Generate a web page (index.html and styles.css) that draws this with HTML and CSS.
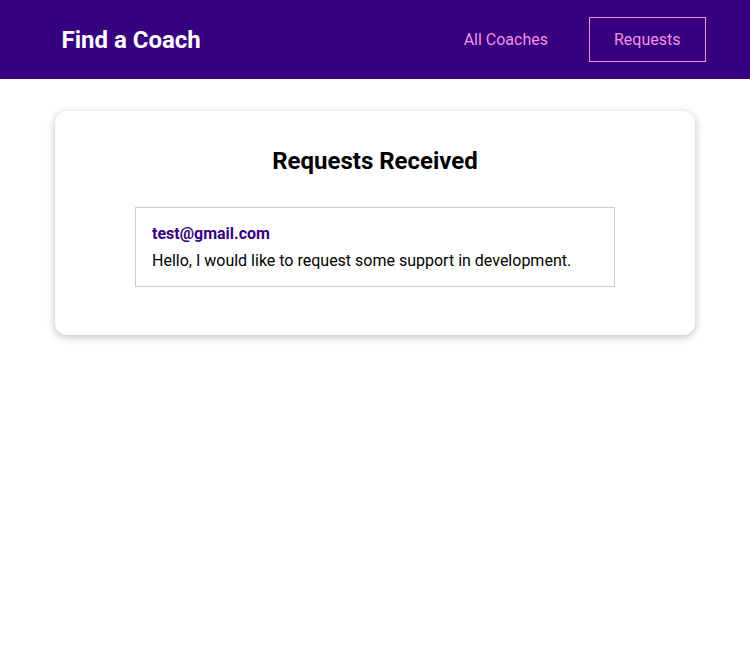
FILE: index.html
```html
<!DOCTYPE html>
<html lang="en">
<head>
<meta charset="utf-8">
<title>Find a Coach</title>
<link rel="stylesheet" href="styles.css">
</head>
<body>
<header class="site-header">
  <nav class="nav">
    <h1 class="brand"><a href="#" class="brand-link">Find a Coach</a></h1>
    <ul class="nav-list">
      <li class="nav-item"><a href="#" class="nav-link">All Coaches</a></li>
      <li class="nav-item"><a href="#" class="nav-link active">Requests</a></li>
    </ul>
  </nav>
</header>
<main>
  <section class="card">
    <header class="card-header">
      <h2 class="card-title">Requests Received</h2>
    </header>
    <ul class="requests">
      <li class="request">
        <div><a href="#" class="request-email">test@gmail.com</a></div>
        <p class="request-message">Hello, I would like to request some support in development.</p>
      </li>
    </ul>
  </section>
</main>
</body>
</html>
```
FILE: styles.css
```css
* { box-sizing: border-box; }
html { font-family: Roboto, "Noto Sans", sans-serif; }
body { margin: 0; background: #fff; color: #000; }

.site-header {
  width: 100%;
  height: 79px;
  background-color: #36007f;
  display: flex;
  justify-content: center;
  align-items: center;
}
.nav {
  width: 90%;
  margin: auto;
  display: flex;
  justify-content: space-between;
  align-items: center;
}
.brand { margin: 0; font-size: 24px; }
.brand-link {
  color: #fff;
  text-decoration: none;
  display: inline-block;
  padding: 12px 24px 12px 23px;
  border: 1px solid transparent;
}
.nav-list {
  list-style: none;
  margin: 0;
  padding: 0;
  display: flex;
  align-items: center;
}
.nav-item { margin: 0 8px; }
.nav-item:last-child { margin-right: 7px; }
.nav-link {
  text-decoration: none;
  color: #f391e3;
  display: inline-block;
  padding: 12px 24px;
  border: 1px solid transparent;
  font-size: 16px;
}
.nav-link.active { border-color: #f391e3; }

.card {
  border-radius: 12px;
  box-shadow: 0 2px 8px rgba(0, 0, 0, 0.26);
  padding: 16px;
  margin: 32px auto;
  max-width: 640px;
}
.card-title {
  text-align: center;
  font-size: 24px;
  margin: 20px 0;
}
.requests {
  list-style: none;
  margin: 32px auto;
  padding: 0;
  max-width: 480px;
}
.request {
  margin: 16px 0;
  border: 1px solid #ccc;
  padding: 16px;
  font-size: 16px;
}
.request-email {
  color: #36007f;
  text-decoration: none;
  font-weight: bold;
}
.request-message { margin: 8px 0 0; }
```
